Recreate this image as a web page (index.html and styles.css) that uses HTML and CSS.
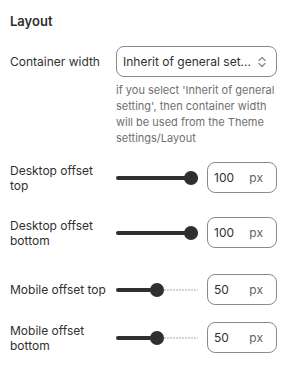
FILE: index.html
```html
<!DOCTYPE html>
<html>
<head>
<meta charset="utf-8">
<link rel="stylesheet" href="styles.css">
</head>
<body>
<div class="panel">
  <h2 class="title">Layout</h2>

  <div class="row row-select">
    <div class="label">Container width</div>
    <div class="control">
      <div class="select">
        <span class="select-text">Inherit of general set...</span>
        <svg class="chev" width="10" height="14" viewBox="0 0 10 14"><path d="M2 5.5 L5 2.5 L8 5.5 M2 8.5 L5 11.5 L8 8.5" fill="none" stroke="#8a8a8a" stroke-width="1.3" stroke-linecap="round" stroke-linejoin="round"/></svg>
      </div>
      <p class="help">if you select 'Inherit of general setting', then container width will be used from the Theme settings/Layout</p>
    </div>
  </div>

  <div class="row row-range r1">
    <div class="label">Desktop offset top</div>
    <div class="slider"><div class="fill" style="width:100%"></div><div class="thumb" style="left:68px"></div></div>
    <div class="num"><span>100</span><span class="unit">px</span></div>
  </div>

  <div class="row row-range r2">
    <div class="label">Desktop offset bottom</div>
    <div class="slider"><div class="fill" style="width:100%"></div><div class="thumb" style="left:68px"></div></div>
    <div class="num"><span>100</span><span class="unit">px</span></div>
  </div>

  <div class="row row-range r3">
    <div class="label">Mobile offset top</div>
    <div class="slider"><div class="fill" style="width:41px"></div><div class="rest" style="left:48px"></div><div class="thumb" style="left:34px"></div></div>
    <div class="num"><span>50</span><span class="unit">px</span></div>
  </div>

  <div class="row row-range r4">
    <div class="label">Mobile offset bottom</div>
    <div class="slider"><div class="fill" style="width:41px"></div><div class="rest" style="left:48px"></div><div class="thumb" style="left:34px"></div></div>
    <div class="num"><span>50</span><span class="unit">px</span></div>
  </div>
</div>
</body>
</html>
```

FILE: styles.css
```css
* { box-sizing: border-box; }
html, body { margin: 0; padding: 0; background: #ffffff; }
body {
  font-family: Inter, "Noto Sans", sans-serif;
  color: #303030;
  font-size: 12px;
  width: 284px;
  height: 375px;
  overflow: hidden;
}
.panel { padding: 12px 7px 0 10px; }
.title {
  margin: 0;
  font-size: 13px;
  font-weight: 600;
  line-height: 18px;
  color: #303030;
}
.row { display: flex; align-items: center; }
.label {
  flex: 0 0 100px;
  margin-right: 6px;
  line-height: 15px;
  color: #303030;
}
.row-select { align-items: flex-start; margin-top: 16px; }
.row-select .label { margin-top: 8px; }
.control { flex: 1; }
.select {
  height: 31px;
  border: 1px solid #8a8a8a;
  border-radius: 8px;
  display: flex;
  align-items: center;
  justify-content: space-between;
  padding: 0 9px 0 6px;
}
.select-text { color: #303030; font-size: 12px; white-space: nowrap; }
.chev { display: block; flex: none; }
.help {
  margin: 5px 0 0 0;
  font-size: 11px;
  line-height: 16px;
  color: #6f6f6f;
}
.row-range { height: 31px; }
.r1 { margin-top: 16px; }
.r2 { margin-top: 24px; }
.r3 { margin-top: 26px; }
.r4 { margin-top: 17px; }
.slider {
  position: relative;
  width: 82px;
  height: 14px;
  margin-right: 9px;
}
.fill {
  position: absolute;
  left: 0;
  top: 5px;
  height: 4px;
  border-radius: 2px;
  background: #303030;
  z-index: 1;
}
.rest {
  position: absolute;
  right: 0;
  top: 6px;
  height: 2px;
  background: repeating-linear-gradient(90deg, #d4d4d4 0 2px, transparent 2px 3px);
}
.thumb {
  position: absolute;
  top: 0;
  width: 14px;
  height: 14px;
  border-radius: 50%;
  background: #303030;
  z-index: 2;
}
.num {
  width: 70px;
  height: 31px;
  border: 1px solid #8a8a8a;
  border-radius: 8px;
  display: flex;
  align-items: center;
  justify-content: space-between;
  padding: 0 13px 0 6px;
  color: #303030;
}
.unit { color: #616161; }
```
